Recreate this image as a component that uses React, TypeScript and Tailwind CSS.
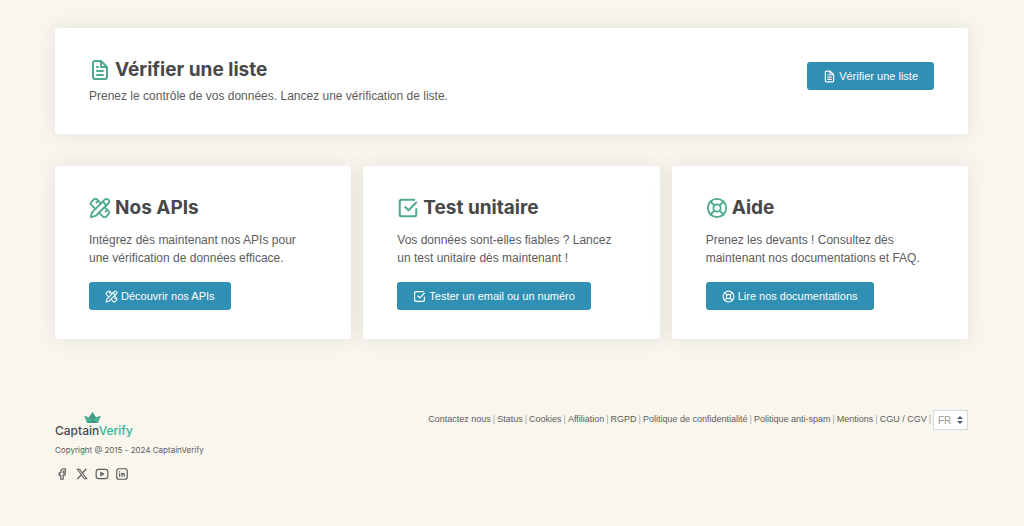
import React, { useState } from 'react';
import { LifeBuoy, PencilRuler } from 'lucide-react';
import { RiTwitterXFill } from 'react-icons/ri';
import { TbBrandFacebook, TbBrandYoutube, TbBrandLinkedin } from 'react-icons/tb';

type Icon = React.ComponentType<{ className?: string }>;

interface Card {
  title: string;
  text: string;
  action: string;
  icon: Icon;
}

function FileIcon({ className }: { className?: string }) {
  return (
    <svg viewBox="1 1 22 22" fill="currentColor" className={className} aria-hidden="true">
      <path d="M9,10h1a1,1,0,0,0,0-2H9a1,1,0,0,0,0,2Zm0,2a1,1,0,0,0,0,2h6a1,1,0,0,0,0-2ZM20,8.940a1.310,1.310,0,0,0-.06-.27l0-.09a1.070,1.070,0,0,0-.19-.28h0l-6-6h0a1.070,1.070,0,0,0-.28-.19.32.32,0,0,0-.09,0A.88.88,0,0,0,13.050,2H7A3,3,0,0,0,4,5V19a3,3,0,0,0,3,3H17a3,3,0,0,0,3-3V9S20,9,20,8.940ZM14,5.410,16.590,8H14ZM18,19a1,1,0,0,1-1,1H7a1,1,0,0,1-1-1V5A1,1,0,0,1,7,4h5V9a1,1,0,0,0,1,1h5Zm-3-3H9a1,1,0,0,0,0,2h6a1,1,0,0,0,0-2Z" />
    </svg>
  );
}

function CheckIcon({ className }: { className?: string }) {
  return (
    <svg
      viewBox="0 0 24 24"
      fill="none"
      stroke="currentColor"
      strokeWidth="2.2"
      strokeLinecap="round"
      strokeLinejoin="round"
      className={className}
      aria-hidden="true"
    >
      <path d="M21 13v6a2 2 0 0 1-2 2H5a2 2 0 0 1-2-2V5a2 2 0 0 1 2-2h14" />
      <path d="m9 11 3.500 3.500L21 6" />
    </svg>
  );
}

const cards: Card[] = [
  {
    title: 'Nos APIs',
    text: 'Intégrez dès maintenant nos APIs pour une vérification de données efficace.',
    action: 'Découvrir nos APIs',
    icon: PencilRuler,
  },
  {
    title: 'Test unitaire',
    text: 'Vos données sont-elles fiables ? Lancez un test unitaire dès maintenant !',
    action: 'Tester un email ou un numéro',
    icon: CheckIcon,
  },
  {
    title: 'Aide',
    text: 'Prenez les devants ! Consultez dès maintenant nos documentations et FAQ.',
    action: 'Lire nos documentations',
    icon: LifeBuoy,
  },
];

const links = [
  'Contactez nous',
  'Status',
  'Cookies',
  'Affiliation',
  'RGPD',
  'Politique de confidentialité',
  'Politique anti-spam',
  'Mentions',
  'CGU / CGV',
];

const socials: { name: string; icon: Icon }[] = [
  { name: 'Facebook', icon: TbBrandFacebook },
  { name: 'X', icon: RiTwitterXFill },
  { name: 'YouTube', icon: TbBrandYoutube },
  { name: 'LinkedIn', icon: TbBrandLinkedin },
];

function CardTitle({ icon: IconTag, children }: { icon: Icon; children: React.ReactNode }) {
  return (
    <h2 className="flex items-center gap-1 font-[Inter,sans-serif] text-[19px] leading-6 font-bold text-[#484848]">
      <IconTag className="size-[22px] shrink-0 text-[#4fab8f]" />
      {children}
    </h2>
  );
}

function ActionButton({ icon: IconTag, children }: { icon: Icon; children: React.ReactNode }) {
  return (
    <button
      type="button"
      className="inline-flex h-7 shrink-0 items-center gap-[3px] rounded-[3px] bg-[#3090b3] px-4 text-[11px] whitespace-nowrap text-white hover:bg-[#287c9b]"
    >
      <IconTag className="size-[13px] shrink-0" />
      {children}
    </button>
  );
}

function Logo() {
  return (
    <a href="#" className="flex w-fit flex-col text-[12px] leading-4 font-medium">
      <svg viewBox="0 0 34 22" className="ml-[29px] h-[11px] w-[17px]" aria-hidden="true">
        <path d="M17 0 25 12 17 19 9 12Z" fill="#3f9d84" />
        <path d="M0 7 13 12 17 17 21 12 34 7 28 22H6Z" fill="#4fae93" />
        <path d="M6 22 17 16 28 22Z" fill="#3c9980" />
      </svg>
      <span className="text-[#4a4a4a]">
        Captain<span className="text-[#35b495]">Verify</span>
      </span>
    </a>
  );
}

export default function App() {
  const [lang, setLang] = useState('FR');

  return (
    <div className="min-h-screen bg-[#f9f6ee] pt-7 pr-14 pb-10 pl-[55px] font-['Liberation_Sans',sans-serif] text-[#5c5c5c]">
      <main>
        <section className="flex items-start justify-between rounded-[3px] bg-white px-[34px] pt-[30px] pb-[29px] shadow-[0_0_20px_rgba(60,80,80,0.12)]">
          <div>
            <CardTitle icon={FileIcon}>Vérifier une liste</CardTitle>
            <p className="mt-[5px] text-[12px] leading-[18px]">
              Prenez le contrôle de vos données. Lancez une vérification de liste.
            </p>
          </div>
          <div className="pt-1">
            <ActionButton icon={FileIcon}>Vérifier une liste</ActionButton>
          </div>
        </section>

        <div className="mt-8 grid grid-cols-3 gap-3">
          {cards.map((card) => (
            <section
              key={card.title}
              className="rounded-[3px] bg-white px-[34px] pt-[30px] pb-[29px] shadow-[0_0_20px_rgba(60,80,80,0.12)]"
            >
              <CardTitle icon={card.icon}>{card.title}</CardTitle>
              <p className="mt-[11px] mb-[15px] text-[12px] leading-[18px]">{card.text}</p>
              <ActionButton icon={card.icon}>{card.action}</ActionButton>
            </section>
          ))}
        </div>
      </main>

      <footer className="mt-[71px] flex items-start justify-between">
        <div className="pt-[2px] font-[Inter,sans-serif]">
          <Logo />
          <p className="mt-[3px] text-[8px] leading-4">Copyright @ 2015 - 2024 CaptainVerify</p>
          <div className="mt-[9px] flex gap-[6px]">
            {socials.map(({ name, icon: IconTag }) => (
              <a key={name} href="#" aria-label={name}>
                <IconTag className="size-[14px]" />
              </a>
            ))}
          </div>
        </div>

        <div className="flex items-center text-[9px]">
          <nav className="flex items-center">
            {links.map((link) => (
              <React.Fragment key={link}>
                <a href="#" className="hover:underline">{link}</a>
                <span className="px-[2px] text-[#a5a5a0]">|</span>
              </React.Fragment>
            ))}
          </nav>
          <div className="relative">
            <select
              aria-label="Langue"
              value={lang}
              onChange={(e) => setLang(e.target.value)}
              className="block h-5 w-[35px] appearance-none border border-[#d3dae2] bg-white pl-1 text-[10px] text-[#9a9a9a]"
            >
              <option>FR</option>
              <option>EN</option>
            </select>
            <svg viewBox="0 0 6 8" className="pointer-events-none absolute top-[6px] right-[5px] h-2 w-[6px]" aria-hidden="true">
              <path d="M3 0 6 3H0ZM3 8 0 5H6Z" fill="#4d5878" />
            </svg>
          </div>
        </div>
      </footer>
    </div>
  );
}
